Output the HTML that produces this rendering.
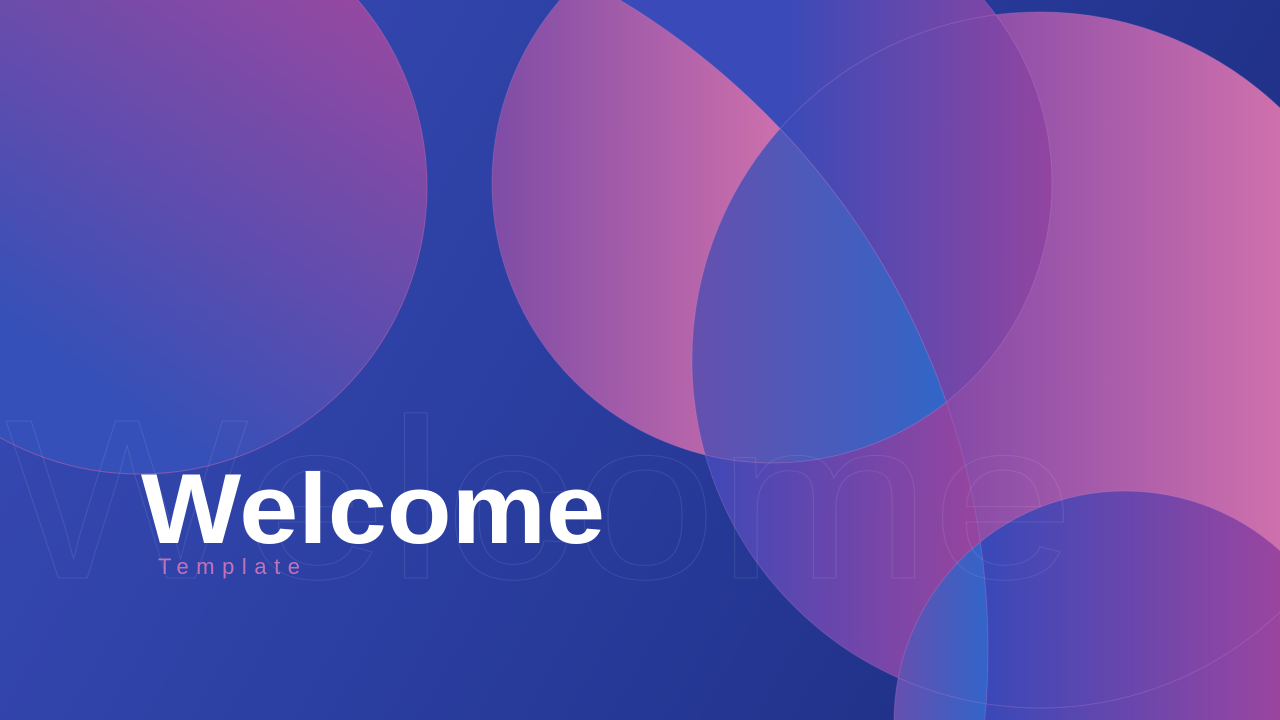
<!DOCTYPE html>
<html><head><meta charset="utf-8"><style>
html,body{margin:0;padding:0;width:1280px;height:720px;overflow:hidden;background:#24338f}
svg{display:block;position:absolute;left:0;top:0}
</style></head><body>
<svg width="1280" height="720" viewBox="0 0 1280 720" xmlns="http://www.w3.org/2000/svg">
<defs>
<linearGradient id="bg" x1="0" y1="0" x2="1280" y2="720" gradientUnits="userSpaceOnUse">
<stop offset="0" stop-color="#3a4cb8"/><stop offset="0.45" stop-color="#2a3ea0"/><stop offset="1" stop-color="#1c2a7c"/></linearGradient>
<linearGradient id="gA" x1="400" y1="0" x2="120" y2="400" gradientUnits="userSpaceOnUse">
<stop offset="0" stop-color="#9a48a0"/><stop offset="1" stop-color="#3550b8"/></linearGradient>
<linearGradient id="gBout" x1="785" y1="0" x2="1052" y2="0" gradientUnits="userSpaceOnUse">
<stop offset="0" stop-color="#3a4ab8"/><stop offset="1" stop-color="#9245a0"/></linearGradient>
<linearGradient id="gBin" x1="495" y1="0" x2="785" y2="0" gradientUnits="userSpaceOnUse">
<stop offset="0" stop-color="#7f4ca6"/><stop offset="1" stop-color="#cf70ac"/></linearGradient>
<linearGradient id="gCout" x1="950" y1="0" x2="1280" y2="0" gradientUnits="userSpaceOnUse">
<stop offset="0" stop-color="#854aa8"/><stop offset="1" stop-color="#cf70ac"/></linearGradient>
<linearGradient id="gCin" x1="700" y1="0" x2="970" y2="0" gradientUnits="userSpaceOnUse">
<stop offset="0" stop-color="#3e48b8"/><stop offset="1" stop-color="#9445a0"/></linearGradient>
<linearGradient id="gLens" x1="692" y1="0" x2="950" y2="0" gradientUnits="userSpaceOnUse">
<stop offset="0" stop-color="#6550ae"/><stop offset="1" stop-color="#3066c8"/></linearGradient>
<linearGradient id="gDout" x1="985" y1="0" x2="1280" y2="0" gradientUnits="userSpaceOnUse">
<stop offset="0" stop-color="#3a48b8"/><stop offset="1" stop-color="#9a45a0"/></linearGradient>
<linearGradient id="gDin" x1="895" y1="0" x2="985" y2="0" gradientUnits="userSpaceOnUse">
<stop offset="0" stop-color="#6550b0"/><stop offset="1" stop-color="#3464c8"/></linearGradient>
<clipPath id="cE"><circle cx="230" cy="650" r="758"/></clipPath>
<clipPath id="cNotE"><path clip-rule="evenodd" d="M-10 -10H1290V730H-10Z M-528 650a758 758 0 1 0 1516 0a758 758 0 1 0 -1516 0Z"/></clipPath>
<clipPath id="cB"><circle cx="772" cy="183" r="280"/></clipPath>
</defs>
<rect width="1280" height="720" fill="url(#bg)"/>
<circle cx="140" cy="187" r="287" fill="url(#gA)" stroke="#b060b0" stroke-opacity="0.6" stroke-width="1"/>
<g clip-path="url(#cNotE)"><circle cx="1040" cy="360" r="348" fill="url(#gCout)"/></g>
<g clip-path="url(#cNotE)"><circle cx="772" cy="183" r="280" fill="url(#gBout)"/></g>
<g clip-path="url(#cE)"><circle cx="1040" cy="360" r="348" fill="url(#gCin)"/></g>
<g clip-path="url(#cE)"><circle cx="772" cy="183" r="280" fill="url(#gBin)"/></g>
<g clip-path="url(#cE)"><g clip-path="url(#cB)"><circle cx="1040" cy="360" r="348" fill="url(#gLens)"/></g></g>
<g clip-path="url(#cNotE)"><circle cx="1125" cy="722" r="231" fill="url(#gDout)"/></g>
<g clip-path="url(#cE)"><circle cx="1125" cy="722" r="231" fill="url(#gDin)"/></g>
<g fill="none" stroke="#c080d0" stroke-opacity="0.3" stroke-width="1">
<circle cx="772" cy="183" r="280"/>
<circle cx="1040" cy="360" r="348"/>
<circle cx="1125" cy="722" r="231"/>
<circle cx="230" cy="650" r="758"/>
</g>
<text x="5" y="578" font-family="Liberation Sans, sans-serif" font-size="228" textLength="1070" lengthAdjust="spacingAndGlyphs" fill="none" stroke="#ffffff" stroke-opacity="0.09" stroke-width="1">Welcome</text>
<text x="141" y="543" font-family="Liberation Sans, sans-serif" font-weight="bold" font-size="99" textLength="464" lengthAdjust="spacingAndGlyphs" fill="#ffffff">Welcome</text>
<text x="158" y="574" font-family="Liberation Sans, sans-serif" font-size="22" textLength="142" lengthAdjust="spacing" fill="#c472b8">Template</text>
</svg>
</body></html>
